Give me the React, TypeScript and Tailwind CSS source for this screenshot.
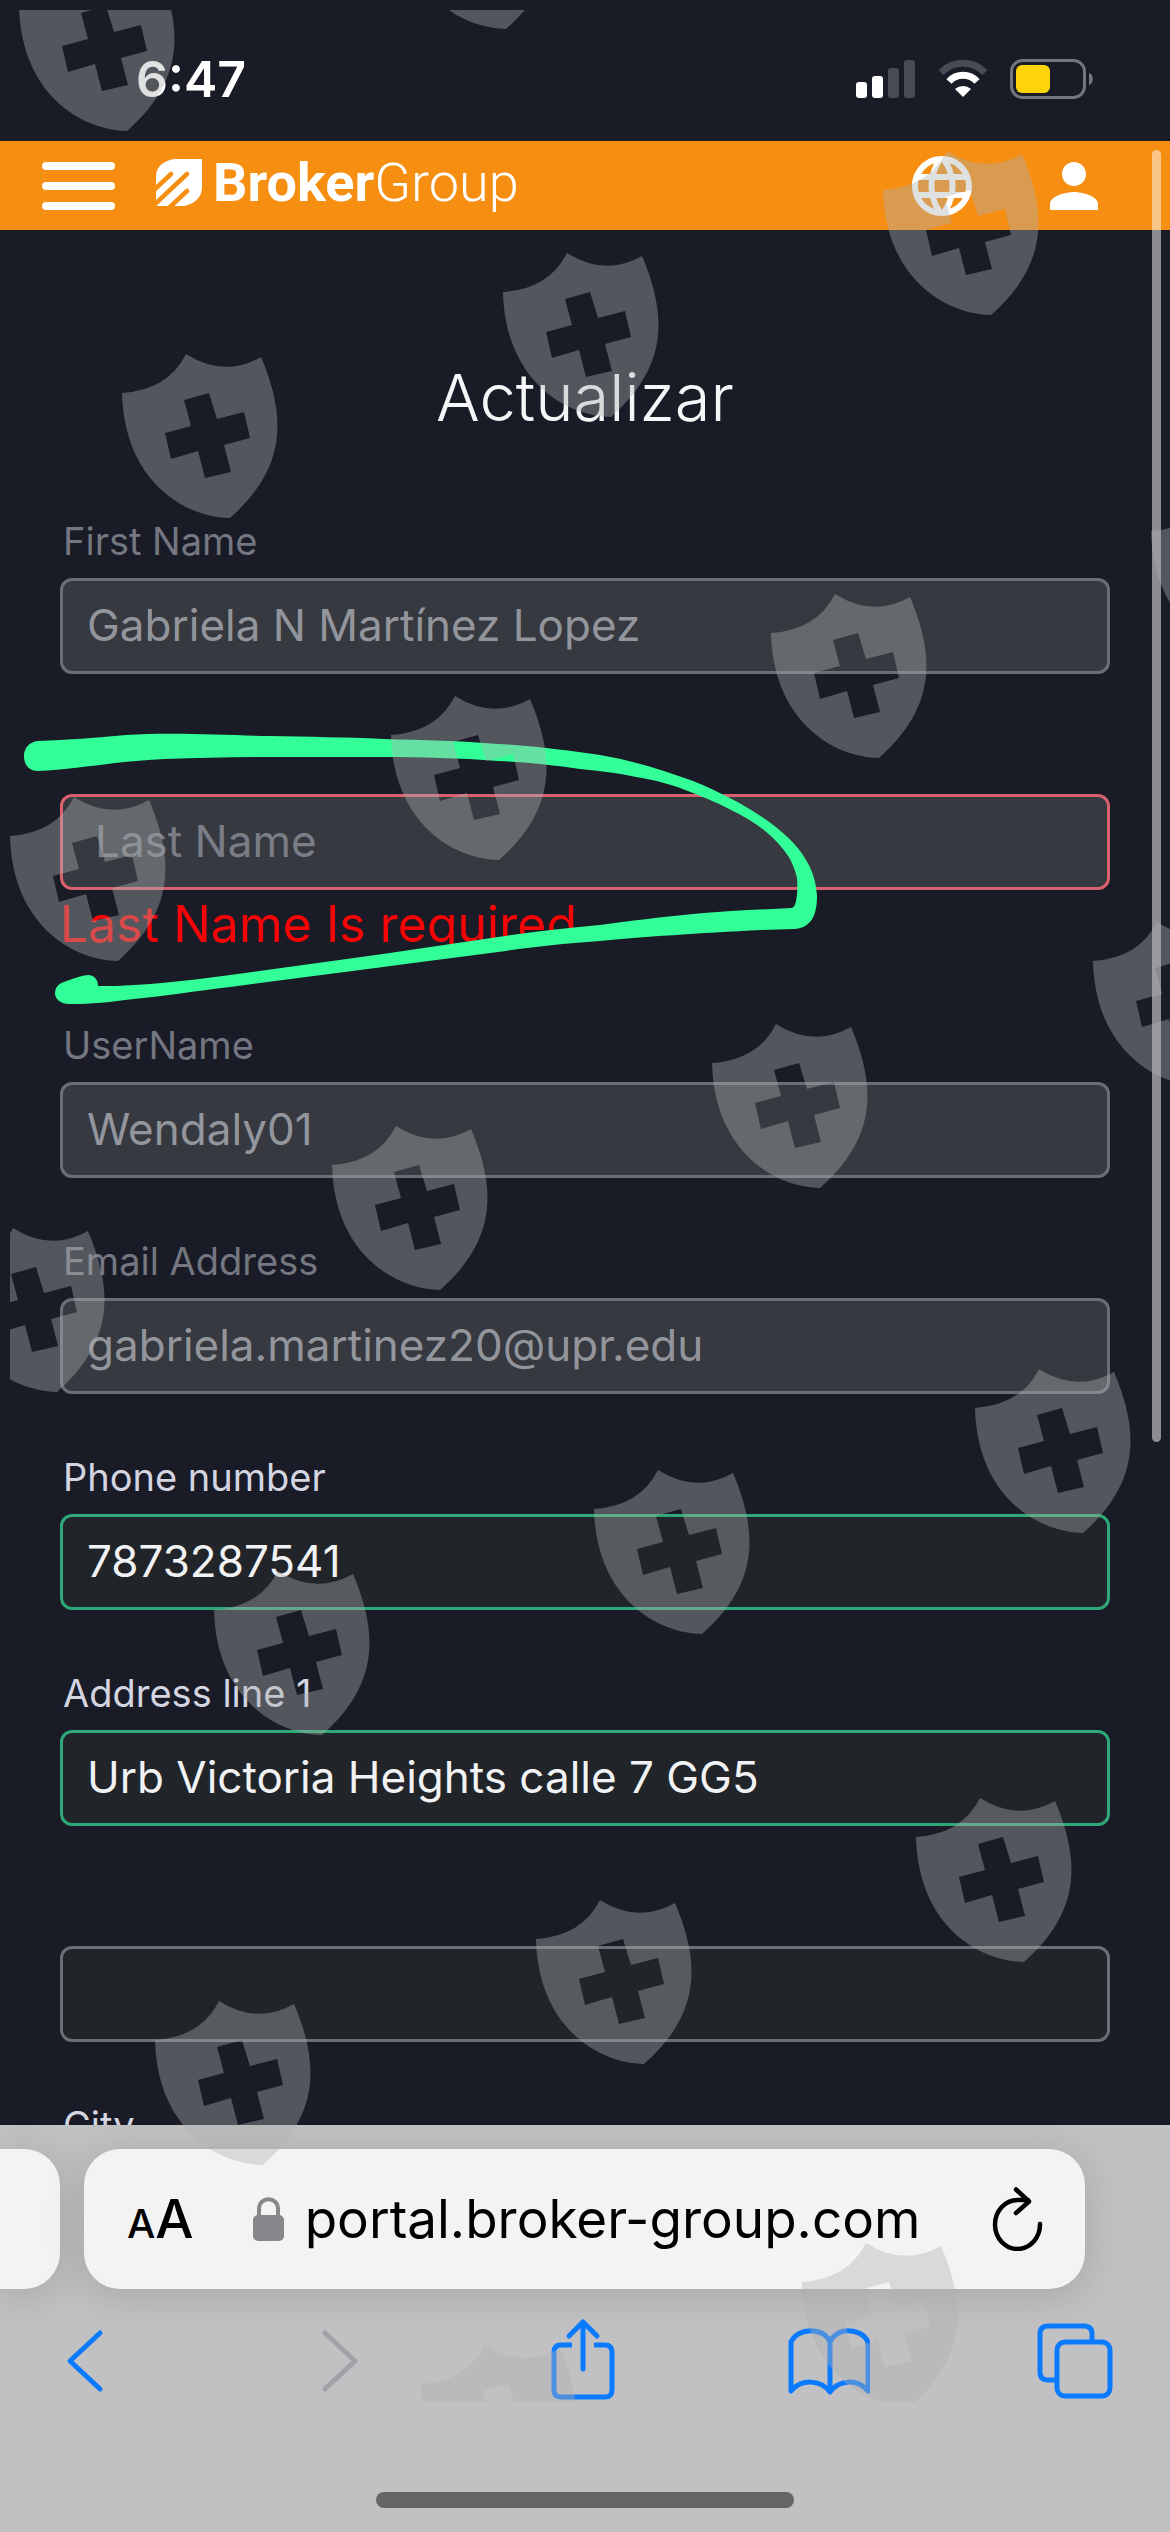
import type { InputHTMLAttributes } from "react";
import { MdLanguage, MdPerson } from "react-icons/md";

const shields: [number, number][] = [
  [19, -33], [398, -135],
  [122, 354], [503, 253], [883, 151],
  [10, 797], [391, 696], [771, 594], [1151, 492],
  [-51, 1228], [332, 1126], [712, 1024], [1093, 922],
  [214, 1571], [594, 1470], [975, 1369],
  [155, 2001], [536, 1900], [916, 1798],
  [421, 2345], [802, 2243],
];

const SHIELD =
  "M0 39Q46 36 64 0Q102 24 139 3C163 60 167 112 108 164C60 163 2 125 0 39Z" +
  "M62 46L69 72L43 79L49 105L76 97L83 124L109 118L102 91L128 84L122 58L95 65L87 39Z";

function ShieldLayer() {
  return (
    <div className="pointer-events-none absolute top-[10px] right-0 left-[10px] h-[2392px] overflow-hidden">
      <svg className="h-full w-full" aria-hidden="true">
        <g transform="translate(-10 -10)" fill="#afb1b1" fillOpacity="0.395" fillRule="evenodd">
          {shields.map(([x, y]) => (
            <path key={`${x}-${y}`} d={SHIELD} transform={`translate(${x} ${y})`} />
          ))}
        </g>
      </svg>
    </div>
  );
}

function MarkerStroke() {
  return (
    <svg className="pointer-events-none absolute top-[730px] left-0 h-[280px] w-[830px]" viewBox="0 730 830 280" aria-hidden="true">
      <path
        fill="#33ff99"
        d="M24 756C24 748 29 742 38 741C66 740 96 738 126 735C170 732 225 735 268 736C310 737 345 737 383 739C425 740 460 741 498 744C535 746 570 751 600 755C635 761 665 771 693 781C740 800 790 830 806 860C814 873 816 884 817 896C817 914 812 928 794 929L761 930C700 933 640 937 600 941C560 944 530 947 498 952C460 957 420 962 383 967L230 987C195 991 165 996 134 999C110 1002 92 1004 70 1004C60 1004 55 999 55 993C55 988 58 984 64 982C72 979 82 975 89 975C95 976 98 980 98 986C110 986 122 986 134 985C168 983 200 979 230 975L383 954L498 937C530 932 565 928 600 925C630 921 660 917 693 914C712 912 730 911 749 910L792 908C797 907 798 890 797 878C794 865 789 856 783 849C770 832 750 819 731 810C720 804 706 798 693 793C674 785 656 780 636 777C618 773 600 771 580 769C553 765 525 762 498 761C460 758 420 757 383 757L268 757C232 757 198 758 165 759C147 760 131 761 115 763C90 766 63 770 38 771C29 771 24 765 24 756Z"
      />
    </svg>
  );
}

function StatusBar() {
  return (
    <div className="flex h-[141px] items-center justify-between pr-[76px] pl-[136px] pt-4">
      <span className="text-[50px] leading-none font-semibold text-white">6:47</span>
      <div className="flex items-center gap-[22px]">
        <svg width="60" height="40" viewBox="0 0 60 40" aria-label="Signal">
          <rect x="0" y="23" width="11" height="16" rx="3" fill="#fff" />
          <rect x="16" y="17" width="11" height="22" rx="3" fill="#fff" />
          <rect x="32" y="9" width="11" height="30" rx="3" fill="#484a55" />
          <rect x="48" y="1" width="11" height="38" rx="3" fill="#484a55" />
        </svg>
        <svg width="50" height="40" viewBox="0 0 50 40" fill="none" aria-label="Wi-Fi">
          <path d="M3 13.5A31 31 0 0 1 47 13.5" stroke="#484a55" strokeWidth="7" />
          <path d="M11 22.5A19 19 0 0 1 39 22.5" stroke="#fff" strokeWidth="7" />
          <path d="M17 30A12 12 0 0 1 33 30L25 38Z" fill="#fff" />
        </svg>
        <svg width="84" height="40" viewBox="0 0 84 40" aria-label="Battery">
          <rect x="1.5" y="1.5" width="73" height="37" rx="11" fill="none" stroke="#74757f" strokeWidth="3" />
          <rect x="6" y="6" width="34" height="28" rx="6" fill="#fdd30a" />
          <path d="M79 14C84 15 84 25 79 26Z" fill="#74757f" />
        </svg>
      </div>
    </div>
  );
}

function SiteHeader() {
  return (
    <header className="flex h-[89px] items-center bg-[#f68e12] pr-[60px] pl-[42px] text-white">
      <button type="button" aria-label="Menu" className="flex w-[73px] flex-col gap-3">
        <span className="h-2 rounded-full bg-white" />
        <span className="h-2 rounded-full bg-white" />
        <span className="h-2 rounded-full bg-white" />
      </button>
      <a href="#home" className="mb-[6px] ml-[41px] flex items-center gap-[11px]">
        <svg width="46" height="47" viewBox="0 0 46 47" aria-hidden="true">
          <path d="M46 0H18C6 2 0 9 0 17V47H28C39 45 46 38 46 28Z" fill="#fff" />
          <path d="M-2 31L15 15M-1 45L31 15M14 48L31 32" fill="none" stroke="#f68e12" strokeWidth="4.5" strokeLinecap="round" />
        </svg>
        <span className="font-[Roboto] text-[54px] leading-none">
          <span className="font-bold">Broker</span>
          <span className="font-light">Group</span>
        </span>
      </a>
      <div className="ml-auto flex items-center gap-[60px]">
        <button type="button" aria-label="Language"><MdLanguage size={72} /></button>
        <button type="button" aria-label="Account"><MdPerson size={72} /></button>
      </div>
    </header>
  );
}

type FieldProps = InputHTMLAttributes<HTMLInputElement> & {
  id: string;
  label?: string;
  tone?: "disabled" | "valid" | "error" | "plain";
  error?: string;
};

const toneClasses = {
  disabled: "border-[#6b6d77] bg-[#36393f] text-[#93959c] pl-6",
  valid: "border-[#2ea878] bg-[#212428] text-[#f1f2f4] pl-6",
  error: "border-[#d9606f] bg-[#36393f] text-[#93959c] placeholder:text-[#7a7d86] pl-8",
  plain: "border-[#6b6d77] bg-[#212428] text-[#f1f2f4] pl-6",
};

function Field({ id, label, tone = "plain", error, ...input }: FieldProps) {
  return (
    <div className="mb-[60px]">
      <label
        htmlFor={id}
        className={
          tone === "disabled"
            ? "mb-3 block h-12 pl-[3px] text-[38px] leading-[46px] text-[#747680]"
            : "mb-3 block h-12 pl-[3px] text-[38px] leading-[46px] text-[#d3d5e0]"
        }
      >
        {label}
      </label>
      <input
        id={id}
        className={`block h-24 w-full rounded-[12px] border-[3px] pr-6 pb-[2px] text-[44px] outline-none ${toneClasses[tone]}`}
        {...input}
      />
      {error && <p className="text-[50px] leading-[68px] text-[#f50505] mb-[64px]">{error}</p>}
    </div>
  );
}

function BrowserBar() {
  return (
    <footer className="relative flex h-[407px] shrink-0 flex-col bg-[#c1c1c4] pt-6">
      <div className="flex h-[140px] gap-6">
        <div className="w-[60px] rounded-r-[36px] bg-[#f3f3f4] shadow-[0_6px_40px_rgba(0,0,0,0.14)]" />
        <div className="mr-[85px] flex flex-1 items-center rounded-[36px] bg-[#f3f3f4] pr-[40px] pl-[43px] text-black shadow-[0_6px_40px_rgba(0,0,0,0.14)]">
          <button type="button" aria-label="Page settings" className="flex items-baseline leading-none font-medium">
            <span className="text-[40px]">A</span>
            <span className="text-[54px]">A</span>
          </button>
          <svg width="31" height="44" viewBox="0 0 31 44" className="ml-[59px]" aria-label="Secure">
            <path d="M6 20V12C6 -1 25 -1 25 12V20" fill="none" stroke="#88878c" strokeWidth="4" />
            <rect y="18" width="31" height="26" rx="5" fill="#88878c" />
          </svg>
          <a href="#portal" className="ml-[21px] text-[53px] leading-none">portal.broker-group.com</a>
          <button type="button" aria-label="Reload" className="ml-auto">
            <svg width="56" height="64" viewBox="0 0 56 64" fill="none" stroke="#000" strokeWidth="4.5" strokeLinecap="round" strokeLinejoin="round">
              <path d="M51 35A22.5 24.5 0 1 1 28.5 11H39M27 0.500L40 12.500L27 24" transform="translate(0 2)" />
            </svg>
          </button>
        </div>
      </div>
      <nav className="mt-[29px] flex h-[84px] items-center justify-between pr-[53px] pl-[43px] text-[#0a7aff]">
        <button type="button" aria-label="Back" className="flex w-[84px] justify-center">
          <svg width="42" height="66" viewBox="0 0 42 66" fill="none" stroke="currentColor" strokeWidth="5" strokeLinecap="round" strokeLinejoin="round"><path d="M36 6L6 34L36 62" /></svg>
        </button>
        <button type="button" aria-label="Forward" className="flex w-[84px] justify-center pl-[14px] text-[#a2a2a6]">
          <svg width="42" height="66" viewBox="0 0 42 66" fill="none" stroke="currentColor" strokeWidth="5" strokeLinecap="round" strokeLinejoin="round"><path d="M6 6L36 34L6 62" /></svg>
        </button>
        <button type="button" aria-label="Share" className="flex w-[84px] justify-center pl-[6px]">
          <svg width="66" height="84" viewBox="0 0 66 84" fill="none" stroke="currentColor" strokeWidth="5" strokeLinejoin="round">
            <path d="M22 27H11Q4 27 4 34V72Q4 79 11 79H55Q62 79 62 72V34Q62 27 55 27H44" />
            <path d="M33 51V5M19 18L33 4L47 18" strokeLinecap="round" />
          </svg>
        </button>
        <button type="button" aria-label="Bookmarks" className="flex w-[84px] justify-center">
          <svg width="84" height="72" viewBox="0 0 84 72" fill="none" stroke="currentColor" strokeWidth="5" strokeLinejoin="round">
            <path d="M44 67V17C38 2 12 2 5 17V66C15 54 34 54 44 67C54 54 72 54 82 66V17C75 2 50 2 44 17" transform="translate(0 1)" />
          </svg>
        </button>
        <button type="button" aria-label="Tabs" className="flex w-[84px] justify-center">
          <svg width="80" height="80" viewBox="0 0 80 80" fill="none" stroke="currentColor" strokeWidth="5">
            <path d="M22 60H13Q5 60 5 52V14Q5 6 13 6H49Q57 6 57 14V22" />
            <rect x="22" y="22" width="53" height="54" rx="8" />
          </svg>
        </button>
      </nav>
      <div className="mt-auto mb-6 h-4 w-[418px] self-center rounded-full bg-[#666667]" />
    </footer>
  );
}

export default function App() {
  return (
    <div className="relative flex h-screen flex-col overflow-hidden bg-[#191b27] font-[Inter,sans-serif]">
      <StatusBar />
      <SiteHeader />
      <main className="min-h-0 flex-1 overflow-hidden px-[60px] pt-[132px]">
        <h1 className="mb-[84px] text-center text-[65px] leading-[72px] font-light text-[#f5f6f8]">Actualizar</h1>
        <form>
          <Field id="first" label="First Name" tone="disabled" defaultValue="Gabriela N Martínez Lopez" readOnly />
          <Field id="last" tone="error" placeholder="Last Name" aria-label="Last Name" error="Last Name Is required" />
          <Field id="user" label="UserName" tone="disabled" defaultValue="Wendaly01" readOnly />
          <Field id="email" label="Email Address" tone="disabled" defaultValue="gabriela.martinez20@upr.edu" readOnly />
          <Field id="phone" label="Phone number" tone="valid" defaultValue="7873287541" />
          <Field id="address1" label="Address line 1" tone="valid" defaultValue="Urb Victoria Heights calle 7 GG5" />
          <Field id="address2" aria-label="Address line 2" />
          <Field id="city" label="City" />
        </form>
      </main>
      <BrowserBar />
      <div className="pointer-events-none absolute top-[150px] right-[9px] h-[1292px] w-[9px] rounded-full bg-white/50" />
      <MarkerStroke />
      <ShieldLayer />
    </div>
  );
}
